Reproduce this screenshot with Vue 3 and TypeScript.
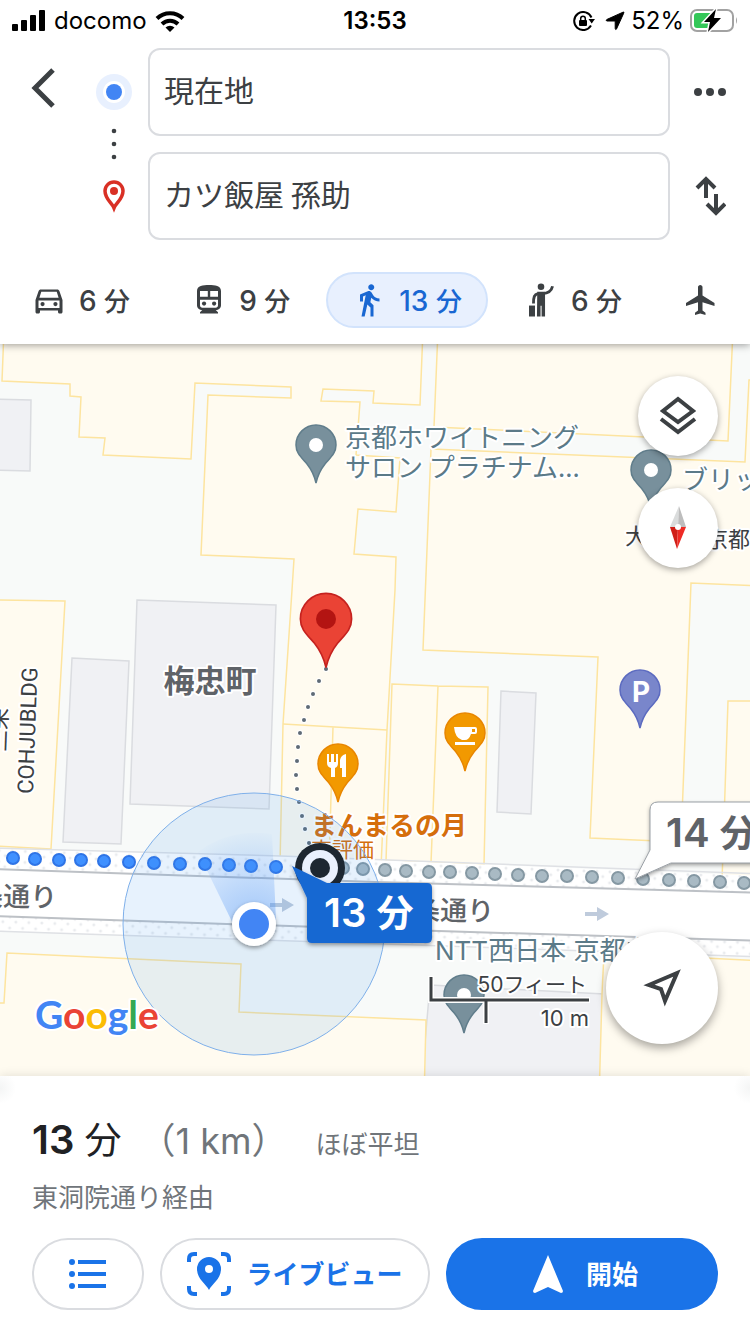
<script setup lang="ts">
import { ref } from 'vue'

type Point = [number, number]

const origin = ref('現在地')
const destination = ref('カツ飯屋 孫助')
const mode = ref('walk')

const modes = [
  { id: 'car', name: '車', minutes: 6 },
  { id: 'train', name: '電車', minutes: 9 },
  { id: 'walk', name: '徒歩', minutes: 13 },
  { id: 'hail', name: '配車サービス', minutes: 6 },
  { id: 'flight', name: '飛行機', minutes: 0 },
]

const routeDots: Point[] = [
  [13, 858], [35, 859], [59, 860], [81, 860], [104, 861], [129, 862],
  [154, 863], [180, 864], [205, 864], [229, 865], [251, 866], [276, 867],
]
const altDots: Point[] = [
  [343, 868], [363, 869], [385, 870], [406, 871], [429, 872], [450, 872],
  [472, 873], [495, 874], [518, 875], [542, 876], [567, 876], [592, 877],
  [618, 878], [643, 879], [669, 880], [694, 881], [720, 882], [744, 883],
]
const footDots: Point[] = [
  [326, 669], [319, 681], [313, 694], [308, 707], [304, 720], [300, 733],
  [298, 747], [297, 761], [296, 775], [297, 789], [299, 802], [302, 816],
  [305, 829], [309, 843],
]

const pinShape = 'M0 38C-2 29-5 24-9 19C-15 12-20 8-20 0A20 20 0 0 1 20 0C20 8 15 12 9 19C5 24 2 29 0 38Z'
</script>

<template>
  <div class="app">
    <header class="top">
      <div class="status">
        <div class="status-side">
          <svg class="signal" viewBox="0 0 34 22" aria-hidden="true">
            <rect x="0" y="14" width="6" height="7" rx="1" />
            <rect x="9" y="10" width="6" height="11" rx="1" />
            <rect x="18" y="5" width="6" height="16" rx="1" />
            <rect x="27" y="0" width="6" height="21" rx="1" />
          </svg>
          <span>docomo</span>
          <svg class="wifi" viewBox="0 0 30 22" aria-hidden="true">
            <g fill="none" stroke="#000" stroke-width="4">
              <path d="M2 8.500A18.500 18.500 0 0 1 28 8.500" />
              <path d="M7 14A11.500 11.500 0 0 1 23 14" />
            </g>
            <path d="M10.500 17.500A6.500 6.500 0 0 1 19.500 17.500L15 22Z" />
          </svg>
        </div>
        <strong class="time">13:53</strong>
        <div class="status-side end">
          <svg class="lock" viewBox="0 0 22 20" aria-hidden="true">
            <path d="M18.500 6.500A9 9 0 1 0 18 14.500" fill="none" stroke="#000" stroke-width="2" />
            <path d="M15.500 8H22L18.700 12.500Z" />
            <rect x="6" y="9" width="8" height="6" rx="1" />
            <path d="M7.700 9V7.500A2.300 2.300 0 0 1 12.300 7.500V9" fill="none" stroke="#000" stroke-width="1.500" />
          </svg>
          <svg class="arrow" viewBox="0 0 20 20" aria-hidden="true">
            <path d="M18 1.200Q19.500 .5 18.700 2.200L11.500 18Q10.500 19.300 10.200 17.500V10H2Q.3 9.500 1.800 8.500Z" stroke="#000" stroke-width="1" />
          </svg>
          <span>52%</span>
          <svg class="battery" viewBox="0 0 48 24" aria-hidden="true">
            <rect x="1" y="1" width="42" height="21" rx="6" fill="none" stroke="#a2a2a2" stroke-width="2" />
            <path d="M46 8Q48 11.500 46 15Z" fill="#a2a2a2" />
            <rect x="4" y="4" width="19" height="15" rx="3" fill="#34c759" />
            <path d="M26 0L14 13H20L18 23L31 9H24Z" stroke="#fff" stroke-width="3" paint-order="stroke" />
          </svg>
        </div>
      </div>

      <form class="search" @submit.prevent>
        <button type="button" class="icon-btn back" aria-label="戻る">
          <svg width="26" height="40" viewBox="0 0 26 40">
            <path d="M22 2L4 20L22 38" fill="none" stroke="#3c4043" stroke-width="5" />
          </svg>
        </button>
        <svg class="rail" viewBox="0 0 36 192" aria-hidden="true">
          <circle cx="18" cy="44" r="18" fill="#e8f0fe" />
          <circle cx="18" cy="44" r="11" fill="#fff" />
          <circle cx="18" cy="44" r="8" fill="#4285f4" />
          <g fill="#3c4043">
            <circle cx="18" cy="83" r="2.300" /><circle cx="18" cy="96" r="2.300" /><circle cx="18" cy="109" r="2.300" />
          </g>
          <path d="M18 160C16 155 9 151 9 143A9 9 0 0 1 27 143C27 151 20 155 18 160Z" fill="none" stroke="#d93025" stroke-width="3.500" />
          <circle cx="18" cy="143" r="4" fill="#d93025" />
        </svg>
        <div class="fields">
          <input v-model="origin" type="text" aria-label="出発地" />
          <input v-model="destination" type="text" aria-label="目的地" />
        </div>
        <div class="side-actions">
          <button type="button" class="icon-btn" aria-label="その他">
            <svg width="32" height="8" viewBox="0 0 32 8" fill="#3c4043">
              <circle cx="4" cy="4" r="4" /><circle cx="16" cy="4" r="4" /><circle cx="28" cy="4" r="4" />
            </svg>
          </button>
          <button type="button" class="icon-btn" aria-label="出発地と目的地を入れ替え">
            <svg width="32" height="40" viewBox="0 0 32 40" fill="none" stroke="#3c4043" stroke-width="4">
              <path d="M12 22V4M3 12L12 3L21 12M22 18V36M13 28L22 37L31 28" />
            </svg>
          </button>
        </div>
      </form>

      <nav class="modes" aria-label="移動手段">
        <button
          v-for="m in modes"
          :key="m.id"
          type="button"
          class="mode"
          :class="{ active: mode === m.id }"
          :aria-label="m.name"
          :aria-pressed="mode === m.id"
          @click="mode = m.id"
        >
          <svg viewBox="0 0 24 24" width="36" height="36" fill="currentColor">
            <template v-if="m.id === 'car'">
              <path fill-rule="evenodd" d="M18.920 6.010C18.720 5.420 18.160 5 17.500 5h-11c-.66 0-1.210.42-1.420 1.010L3 12v8c0 .55.45 1 1 1h1c.55 0 1-.45 1-1v-1h12v1c0 .55.45 1 1 1h1c.55 0 1-.45 1-1v-8zM6.850 6.500h10.300L18.400 10.500H5.600zM19 17.300H5V12.300h14z" />
              <circle cx="7.700" cy="14.700" r="1.400" /><circle cx="16.300" cy="14.700" r="1.400" />
            </template>
            <template v-else-if="m.id === 'train'">
              <path fill-rule="evenodd" d="M12 2C8 2 4 2.500 4 6v9.500C4 17.400 5.600 18.700 7.500 18.700L6 20.200V21h12v-.8l-1.500-1.500c1.900 0 3.500-1.300 3.500-3.200V6c0-3.500-4-4-8-4zM6 6h5.200v3.900H6zM12.800 6H18v3.900h-5.200zM6 11.800h12v3.700c0 1-.6 1.600-1.600 1.600H7.600C6.600 17.100 6 16.500 6 15.500z" />
              <circle cx="8.700" cy="14.400" r="1.400" /><circle cx="15.400" cy="14.400" r="1.400" />
            </template>
            <path v-else-if="m.id === 'walk'" d="M13.500 5.500c1.100 0 2-.9 2-2s-.9-2-2-2-2 .9-2 2 .9 2 2 2zM9.800 8.900L7 23h2.100l1.800-8 2.100 2v6h2v-7.500l-2.100-2 .6-3C14.800 12 16.800 13 19 13v-2c-1.900 0-3.500-1-4.300-2.400l-1-1.600c-.4-.6-1-1-1.700-1-.3 0-.5.1-.8.1L6 8.300V13h2V9.600l1.800-.7" />
            <template v-else-if="m.id === 'hail'">
              <circle cx="12" cy="3.200" r="2.200" />
              <path d="M9.500 6.500H14.700V23H12.400V15.800H11.700V23H9.300Z" />
              <path d="M13 7.700C17 7.500 19 6 19.700 2.800M10 7.700C7.500 8.200 7 10 7 14.300" fill="none" stroke="currentColor" stroke-width="1.900" />
              <rect x="4" y="15.700" width="4" height="7.300" />
            </template>
            <path v-else d="M21 16v-2l-8-5V3.500c0-.83-.67-1.500-1.500-1.500S10 2.670 10 3.500V9l-8 5v2l8-2.500V19l-2 1.500V22l3.500-1 3.500 1v-1.500L13 19v-5.500l8 2.500z" />
          </svg>
          <span v-if="m.minutes" class="mins">{{ m.minutes }} <span class="unit">分</span></span>
        </button>
      </nav>
    </header>

    <main class="map">
      <svg class="canvas" viewBox="0 344 750 732" preserveAspectRatio="xMidYMid slice" role="img" aria-label="地図">
        <defs>
          <pattern id="paving" width="13" height="11" patternUnits="userSpaceOnUse" patternTransform="rotate(2)">
            <circle cx="3" cy="3" r="1.500" fill="#e9ebee" /><circle cx="9" cy="8" r="1.500" fill="#e9ebee" />
          </pattern>
          <radialGradient id="beam" gradientUnits="userSpaceOnUse" cx="254" cy="924" r="95">
            <stop offset="0" stop-color="#4a90f4" stop-opacity=".45" />
            <stop offset="1" stop-color="#4a90f4" stop-opacity="0" />
          </radialGradient>
          <filter id="lift" x="-20%" y="-20%" width="140%" height="150%">
            <feDropShadow dx="0" dy="2" stdDeviation="2" flood-opacity=".4" />
          </filter>
        </defs>
        <rect y="300" width="750" height="820" fill="#f8faf9" />

        <g fill="#f0f1f4" stroke="#dadce0" stroke-width="1.500">
          <path d="M-5 399L31 400L30 471L-5 470Z" />
          <path d="M137 600L276 605L269 809L130 804Z" />
          <path d="M72 658L129 661L121 844L63 842Z" />
          <path d="M501 691L536 693L531 814L497 812Z" />
          <path d="M430 985L604 994L604 1100H420Z" />
        </g>
        <g fill="#fffbf0" stroke="#fde49f" stroke-width="1.500">
          <path d="M4 330L2 381L70 384V396L81 397L79 437L105 438L103 455L191 459L195 383L291 387V398L208 395L201 555L294 559L292 590L283 724L280 864L381 868L387 730L395 590L396 557L354 554L358 509L396 512L400 458L356 455L360 402L321 401L323 389L374 391L373 403L420 405L423 330Z" />
          <path d="M283 724L387 730M333 727L329 866" />
          <path d="M438 330L434 427L728 441L733 330Z" />
          <path d="M431 449L745 462L749 380H765V586L691 583L681 842L590 838L598 657L423 650Z" />
          <path d="M728 701H765V885L722 881Z" />
          <path d="M392 684L438 686L488 687L484 865L386 861ZM438 686L431 863" />
          <path d="M-5 600L65 601L51 849L-5 846Z" />
          <path d="M-5 1003H4L7 953L241 964L239 1012L426 1020L424 1100H-5Z" />
          <path d="M602 994L604 953L765 961V1100H599Z" />
        </g>

        <path d="M-5 848L281 856L765 876V957L445 946L-5 931Z" fill="#fff" />
        <path d="M-5 848L281 856L765 876V893L375 882L-5 869ZM-5 916L375 929L765 941V957L445 946L-5 931Z" fill="url(#paving)" />
        <g fill="none">
          <path d="M-5 848L281 856L765 874M-5 931L445 946L765 957" stroke="#dfe1e5" stroke-width="1.500" />
          <path d="M-5 869L375 882L765 893M-5 916L375 929L765 941" stroke="#bdc1c6" stroke-width="2" />
        </g>
        <g fill="#bfcbdc">
          <path d="M585 912H597V907L609 914L597 921V916H585Z" />
          <path d="M270 903H282V898L294 905L282 912V907H270Z" />
        </g>

        <g class="road">
          <text x="-51" y="906" transform="rotate(1 0 905)">三条通り</text>
          <text x="386" y="920" transform="rotate(1 440 918)">三条通り</text>
        </g>
        <text class="district" x="210" y="692">梅忠町</text>
        <g class="building">
          <text class="latin" transform="translate(33 794) rotate(-88)">COHJUBLDG</text>
          <text transform="translate(6 752) rotate(-88)">三栄</text>
          <text x="625" y="544">大</text>
          <text x="706" y="547">京都</text>
        </g>
        <g class="poi">
          <text x="345" y="447">京都ホワイトニング</text>
          <text x="345" y="477">サロン プラチナム...</text>
          <text x="682" y="489">ブリッツ</text>
          <text class="inter" x="435" y="960">NTT西日本 京都中</text>
        </g>
        <g class="food">
          <text x="311" y="835">まんまるの月</text>
          <text class="rating" x="311" y="857">高評価</text>
        </g>

        <g fill="#a9bac4" stroke="#8598a3" stroke-width="2">
          <circle v-for="(d, i) in altDots" :key="i" :cx="d[0]" :cy="d[1]" r="6" />
        </g>
        <g fill="#3f90ff" stroke="#2f74e6" stroke-width="2">
          <circle v-for="(d, i) in routeDots" :key="i" :cx="d[0]" :cy="d[1]" r="6" />
        </g>
        <g fill="#5f6b76" stroke="#fff" stroke-width="2" paint-order="stroke">
          <circle v-for="(d, i) in footDots" :key="i" :cx="d[0]" :cy="d[1]" r="2" />
        </g>

        <g fill="#78909c" stroke="#607d8b" stroke-width="1.500">
          <g transform="translate(316 445)"><path :d="pinShape" /><circle r="7" fill="#fff" stroke="none" /></g>
          <g transform="translate(651 470)"><path :d="pinShape" /><circle r="7" fill="#fff" stroke="none" /></g>
          <g transform="translate(464 995)"><path :d="pinShape" /><circle r="7" fill="#fff" stroke="none" /></g>
        </g>
        <g transform="translate(640 690)">
          <path :d="pinShape" fill="#7986cb" stroke="#5c6bc0" stroke-width="1.500" />
          <text class="parking" x="1" y="12">P</text>
        </g>
        <g transform="translate(465 733)">
          <path :d="pinShape" fill="#f29900" stroke="#e88600" stroke-width="1.500" />
          <path fill="#fff" fill-rule="evenodd" d="M-11-6H10Q12-6 12-4V-1Q12 1 10 1H6Q4 7 0 7H-3Q-10 5-11-6ZM7-4V-1H10V-4ZM-10 9H10V12H-10Z" />
        </g>
        <g transform="translate(338 764)">
          <path :d="pinShape" fill="#f29900" stroke="#e88600" stroke-width="1.500" />
          <path fill="#fff" d="M-11-10H-9V-2H-7V-10H-4V-2H-2V-10H0V-1Q0 3-3 4V13H-7V4Q-11 3-11-1ZM8-10V13H4V4H2V-4Q3-9 8-10Z" />
        </g>

        <circle cx="254" cy="924" r="131" fill="#3790ec" fill-opacity=".12" stroke="#7fb0ea" stroke-width="1" />
        <path d="M240 938L198 852Q230 828 272 834L276 920Z" fill="url(#beam)" />
        <g transform="translate(326 619)">
          <path :d="pinShape" transform="scale(1.280)" fill="#ea4335" stroke="#c5221f" stroke-width="1.300" />
          <circle r="10" fill="#b31412" />
        </g>
        <circle cx="254" cy="924" r="22" fill="#fff" filter="url(#lift)" />
        <circle cx="254" cy="924" r="15" fill="#4285f4" />
        <g>
          <circle cx="320" cy="868" r="25" fill="#1d2731" />
          <circle cx="320" cy="868" r="18" fill="#eaf1fe" />
          <circle cx="320" cy="868" r="10" fill="#1d2731" />
        </g>
        <path d="M292 866L327 883H427Q432 883 432 888V938Q432 943 427 943H312Q307 943 307 938V898Z" fill="#1967d2" filter="url(#lift)" />
        <text class="bubble on" x="324" y="927">13 <tspan class="jp">分</tspan></text>
        <path d="M658 802H770V863H671L635 879L650 850V810Q650 802 658 802Z" fill="#fff" filter="url(#lift)" />
        <path d="M770 802H658Q650 802 650 810V850L635 879L671 863H770" fill="none" stroke="#9aa0a6" stroke-width="1" />
        <text class="bubble" x="666" y="847">14 <tspan class="jp">分</tspan></text>

        <text class="logo" x="35" y="1029" aria-label="Google"><tspan fill="#4285f4">G</tspan><tspan fill="#ea4335">o</tspan><tspan fill="#fbbc04">o</tspan><tspan fill="#4285f4">g</tspan><tspan fill="#34a853">l</tspan><tspan fill="#ea4335">e</tspan></text>

        <g fill="none">
          <path d="M431 976V1000H590M486 1000V1024" stroke="#fff" stroke-width="6" />
          <path d="M431 977V1000H589M486 1000V1023" stroke="#3c4043" stroke-width="3" />
        </g>
        <g class="scale">
          <text class="feet" x="587" y="992">50フィート</text>
          <text x="589" y="1026">10 m</text>
        </g>
      </svg>

      <div class="controls">
        <button type="button" class="round" aria-label="レイヤ">
          <svg width="40" height="40" viewBox="0 0 40 40" fill="none" stroke="#3c4043" stroke-width="4">
            <path d="M20 3L35 15L20 26L5 15Z" /><path d="M3 23L20 36L37 23" />
          </svg>
        </button>
        <button type="button" class="round" aria-label="コンパス">
          <svg width="20" height="44" viewBox="0 0 20 44">
            <path d="M11 0L2 21H10Z" fill="#dadcdc" /><path d="M11 0L18 21H10Z" fill="#bdbdbd" />
            <path d="M2 21H10L9 43Z" fill="#d01f18" /><path d="M18 21H10L9 43Z" fill="#ee2b25" />
            <circle cx="10" cy="21" r="3" fill="#fff" />
          </svg>
        </button>
      </div>
      <button type="button" class="round locate" aria-label="現在地に移動">
        <svg width="40" height="40" viewBox="0 0 40 40">
          <path d="M35 5L7 17L19 21L23 33Z" fill="none" stroke="#3c4043" stroke-width="4" />
        </svg>
      </button>
    </main>

    <section class="panel">
      <h1 class="summary">
        <span class="big">13 <span class="jp">分</span></span>
        <span class="dist">（1 km）</span>
        <span class="flat">ほぼ平坦</span>
      </h1>
      <p class="via">東洞院通り経由</p>
      <div class="buttons">
        <button type="button" class="pill" aria-label="経路の詳細">
          <svg width="38" height="32" viewBox="0 0 38 32" fill="#1a73e8">
            <circle cx="3" cy="4" r="3" /><circle cx="3" cy="16" r="3" /><circle cx="3" cy="28" r="3" />
            <path d="M9 2H37V6H9ZM9 14H37V18H9ZM9 26H37V30H9Z" />
          </svg>
        </button>
        <button type="button" class="pill">
          <svg width="44" height="44" viewBox="0 0 44 44" fill="#1a73e8">
            <path d="M2 10V7Q2 2 7 2H10M34 2H37Q42 2 42 7V10M42 34V37Q42 42 37 42H34M10 42H7Q2 42 2 37V34" fill="none" stroke="#1a73e8" stroke-width="4" />
            <path fill-rule="evenodd" d="M22 38C19 32 10 27 10 17A12 12 0 0 1 34 17C34 27 25 32 22 38ZM22 13A4 4 0 1 0 22 21A4 4 0 1 0 22 13Z" />
          </svg>
          <span>ライブビュー</span>
        </button>
        <button type="button" class="pill start">
          <svg width="32" height="40" viewBox="0 0 32 40" fill="#fff">
            <path d="M16 1L31 37Q31 39 29 39L16 33L3 39Q1 39 1 37Z" />
          </svg>
          <span>開始</span>
        </button>
      </div>
    </section>
  </div>
</template>

<style>
body {
  margin: 0;
  background: #fff;
}
</style>

<style scoped>
.app {
  display: flex;
  flex-direction: column;
  min-height: 100vh;
  overflow: hidden;
  background: #fff;
  color: #3c4043;
  font-family: Inter, "Noto Sans CJK JP", sans-serif;
}
button {
  margin: 0;
  padding: 0;
  border: 0;
  background: none;
  color: inherit;
  font: inherit;
  cursor: pointer;
}
svg {
  display: block;
  flex: none;
}
.top {
  position: relative;
  z-index: 1;
  background: #fff;
  box-shadow: 0 1px 8px rgba(0, 0, 0, 0.4);
}
.status {
  display: grid;
  grid-template-columns: 1fr auto 1fr;
  align-items: center;
  box-sizing: border-box;
  height: 40px;
  padding: 2px 12px 0;
  color: #000;
  font-size: 24px;
  line-height: 38px;
}
.status-side {
  display: flex;
  align-items: center;
  gap: 8px;
}
.end {
  justify-content: flex-end;
  gap: 6px;
}
.time {
  font-weight: 600;
}
.signal {
  width: 34px;
  height: 22px;
}
.wifi {
  width: 30px;
  height: 22px;
}
.lock {
  width: 22px;
  height: 20px;
  margin-right: 4px;
}
.arrow {
  width: 20px;
  height: 20px;
}
.battery {
  width: 48px;
  height: 24px;
}
.search {
  display: grid;
  grid-template-columns: 96px 36px 1fr 80px;
  padding-top: 8px;
}
.icon-btn {
  display: flex;
  align-items: center;
  justify-content: center;
  height: 88px;
}
.back {
  height: 80px;
  padding-right: 8px;
}
.rail {
  width: 36px;
  height: 192px;
}
.fields,
.side-actions {
  display: flex;
  flex-direction: column;
  gap: 16px;
}
.fields {
  min-width: 0;
  padding-left: 16px;
}
.fields input {
  box-sizing: border-box;
  width: 100%;
  height: 88px;
  padding: 0 14px 6px;
  border: 2px solid #dadce0;
  border-radius: 12px;
  background: #fff;
  color: #3c4043;
  font-family: "Noto Sans CJK JP", sans-serif;
  font-size: 30px;
  font-weight: 400;
}
.modes {
  display: flex;
  gap: 10px;
  padding: 32px 0 16px 6px;
  overflow: hidden;
}
.mode {
  display: flex;
  flex: none;
  align-items: center;
  gap: 12px;
  box-sizing: border-box;
  height: 56px;
  padding: 0 24px 0 23px;
  border: 2px solid transparent;
  border-radius: 28px;
  font-size: 28px;
  font-weight: 500;
}
.active {
  border-color: #d2e3fc;
  background: #e8f0fe;
  color: #1967d2;
}
.mins {
  padding-bottom: 2px;
  white-space: nowrap;
}
.unit {
  font-size: 26px;
}
.map {
  position: relative;
  flex: 1;
  min-height: 480px;
}
.canvas {
  position: absolute;
  inset: 0;
  width: 100%;
  height: 100%;
}
.canvas text {
  stroke: #fff;
  stroke-width: 4px;
  stroke-linejoin: round;
  paint-order: stroke;
}
.road,
.district {
  fill: #5f6368;
  font-size: 27px;
  font-weight: 500;
}
.canvas .district {
  font-size: 31px;
  font-weight: 700;
  text-anchor: middle;
}
.building {
  fill: #3c4043;
  font-size: 22px;
}
.latin {
  font-family: Roboto, sans-serif;
}
.poi {
  fill: #5b7a88;
  font-family: "Noto Sans CJK JP", sans-serif;
  font-size: 26px;
}
.inter {
  font-family: Inter, "Noto Sans CJK JP", sans-serif;
}
.food {
  fill: #d56e0c;
  font-size: 26px;
  font-weight: 700;
}
.rating {
  font-size: 21px;
  font-weight: 400;
}
.canvas .parking,
.canvas .bubble {
  stroke: none;
}
.parking {
  fill: #fff;
  font-size: 28px;
  font-weight: 700;
  text-anchor: middle;
}
.bubble {
  fill: #5f6368;
  font-size: 40px;
  font-weight: 600;
}
.bubble.on {
  fill: #fff;
}
.bubble .jp {
  font-size: 37px;
}
.logo {
  font-family: Lato, sans-serif;
  font-size: 39px;
  font-weight: 700;
}
.scale {
  fill: #3c4043;
  font-size: 22px;
  text-anchor: end;
}
.feet {
  font-size: 21px;
}
.controls {
  position: absolute;
  top: 32px;
  right: 32px;
  display: grid;
  gap: 32px;
}
.round {
  display: flex;
  align-items: center;
  justify-content: center;
  width: 80px;
  height: 80px;
  border-radius: 50%;
  background: #fff;
  box-shadow: 0 2px 6px rgba(0, 0, 0, 0.35);
}
.locate {
  position: absolute;
  right: 32px;
  bottom: 32px;
  width: 112px;
  height: 112px;
  box-shadow: 0 4px 10px rgba(0, 0, 0, 0.35);
}
.panel {
  position: relative;
  padding: 40px 32px 24px;
  background:
    radial-gradient(circle at 0 12px, #f4f5f5, transparent 16px),
    radial-gradient(circle at 100% 12px, #f4f5f5, transparent 16px),
    #fff;
  box-shadow: 0 0 10px rgba(0, 0, 0, 0.12);
}
.summary {
  display: flex;
  align-items: baseline;
  height: 48px;
  margin: 0 0 16px;
  font-size: 40px;
  font-weight: 400;
  line-height: 48px;
  white-space: nowrap;
}
.big {
  color: #202124;
  font-weight: 600;
}
.big .jp {
  font-size: 37px;
  font-weight: 400;
}
.dist {
  margin-left: 18px;
  color: #70757a;
  font-size: 36px;
}
.flat {
  margin-left: 28px;
  color: #70757a;
  font-size: 26px;
}
.via {
  margin: 0 0 22px;
  color: #70757a;
  font-size: 26px;
  line-height: 36px;
}
.buttons {
  display: grid;
  grid-template-columns: 112px 270fr 272fr;
  gap: 16px;
}
.pill {
  display: flex;
  align-items: center;
  justify-content: center;
  gap: 15px;
  box-sizing: border-box;
  height: 72px;
  border: 2px solid #dadce0;
  border-radius: 36px;
  color: #1a73e8;
  font-size: 26px;
  font-weight: 700;
  white-space: nowrap;
}
.pill span {
  padding-bottom: 4px;
}
.start {
  gap: 22px;
  padding-left: 6px;
  border-color: #1a73e8;
  background: #1a73e8;
  color: #fff;
}
</style>
